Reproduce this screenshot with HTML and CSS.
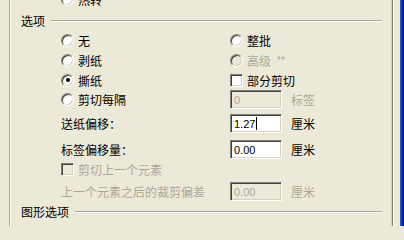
FILE: index.html
```html
<!DOCTYPE html>
<html>
<head>
<meta charset="utf-8">
<link rel="stylesheet" href="styles.css">
</head>
<body>
<div class="panel">
  <div class="row r0">
    <label class="opt"><span class="radio"></span>热转</label>
  </div>
  <div class="legend h20"><span>选项</span><i class="rule"></i></div>
  <div class="row h20">
    <label class="opt"><span class="radio"></span>无</label>
    <label class="opt span2"><span class="radio"></span>整批</label>
  </div>
  <div class="row h20">
    <label class="opt"><span class="radio"></span>剥纸</label>
    <label class="opt span2 dis"><span class="radio off"></span>高级 <span class="ast">**</span></label>
  </div>
  <div class="row h20">
    <label class="opt"><span class="radio on"></span>撕纸</label>
    <label class="opt span2"><span class="check"></span>部分剪切</label>
  </div>
  <div class="row h19">
    <label class="opt"><span class="radio"></span>剪切每隔</label>
    <div class="field off">0</div>
    <span class="dis">标签</span>
  </div>
  <div class="row h19 m5">
    <span>送纸偏移：</span>
    <div class="field">1.27<span class="caret"></span></div>
    <span>厘米</span>
  </div>
  <div class="row h19 m7">
    <span>标签偏移量：</span>
    <div class="field">0.00</div>
    <span>厘米</span>
  </div>
  <div class="row h21">
    <label class="opt dis"><span class="check off"></span>剪切上一个元素</label>
  </div>
  <div class="row h19 m2">
    <span class="dis">上一个元素之后的裁剪偏差</span>
    <div class="field off">0.00</div>
    <span class="dis">厘米</span>
  </div>
  <div class="legend h20"><span>图形选项</span><i class="rule"></i></div>
</div>
<div class="gap"></div>
<div class="edge"></div>
</body>
</html>
```
FILE: styles.css
```css
html, body {
  margin: 0;
  padding: 0;
}
body {
  width: 404px;
  height: 226px;
  overflow: hidden;
  display: flex;
  background: #ECE9D8;
  font-family: "Noto Sans CJK SC", "Noto Sans", sans-serif;
  font-size: 12px;
  color: #000;
}
.panel {
  flex: none;
  margin-left: 9px;
  width: 385px;
  height: 226px;
  box-sizing: border-box;
  border-left: 1px solid #ACA899;
  border-right: 1px solid #ffffff;
  box-shadow: inset 1px 0 0 #ffffff, inset -1px 0 0 #808080, inset -2px 0 0 #D4D0C8;
  overflow: hidden;
}
.gap {
  flex: none;
  width: 6px;
}
.edge {
  flex: none;
  width: 4px;
  background: linear-gradient(to right, #2B5BE0 0, #2B5BE0 1px, #0831D9 1px, #0831D9 2px, #0026B8 2px, #0026B8 3px, #001C9C 3px);
}
.row {
  display: grid;
  grid-template-columns: 160px 52px auto;
  column-gap: 9px;
  align-items: center;
  padding-left: 51px;
  white-space: nowrap;
}
.r0 { height: 21px; margin-top: -11px; }
.h19 { height: 19px; }
.h20 { height: 20px; }
.h21 { height: 21px; }
.m2 { margin-top: 2px; }
.m5 { margin-top: 5px; }
.m7 { margin-top: 7px; }
.span2 { grid-column: 2 / 4; }
.opt {
  display: flex;
  align-items: center;
  gap: 4px;
}
.dis { color: #ACA899; }
.ast {
  font-family: "Liberation Sans", sans-serif;
  font-size: 10px;
  margin-left: 2px;
  align-self: flex-start;
  margin-top: 3px;
}
.radio {
  flex: none;
  width: 13px;
  height: 13px;
  box-sizing: border-box;
  border-radius: 50%;
  border: 1px solid;
  border-color: #808080 #ffffff #ffffff #808080;
  box-shadow: inset 1px 1px 0 #404040, inset -1px -1px 0 #D4D0C8;
  background: #ffffff;
  display: grid;
  place-items: center;
}
.radio.off { background: #ECE9D8; }
.radio.on::after {
  content: "";
  width: 4px;
  height: 4px;
  border-radius: 50%;
  background: #000;
}
.check {
  flex: none;
  width: 13px;
  height: 13px;
  box-sizing: border-box;
  border: 1px solid;
  border-color: #808080 #ffffff #ffffff #808080;
  box-shadow: inset 1px 1px 0 #404040, inset -1px -1px 0 #D4D0C8;
  background: #ffffff;
}
.check.off { background: #ECE9D8; }
.field {
  width: 52px;
  height: 19px;
  box-sizing: border-box;
  border: 1px solid;
  border-color: #808080 #ffffff #ffffff #808080;
  box-shadow: inset 1px 1px 0 #404040, inset -1px -1px 0 #D4D0C8;
  background: #ffffff;
  font-family: "Liberation Sans", "DejaVu Sans", sans-serif;
  font-size: 11px;
  padding-left: 3px;
  display: flex;
  align-items: center;
}
.field.off {
  background: #ECE9D8;
  color: #ACA899;
}
.caret {
  width: 1px;
  height: 13px;
  background: #000;
  margin-left: 1px;
}
.legend {
  display: flex;
  align-items: center;
  padding-left: 11px;
  margin-right: 11px;
  white-space: nowrap;
}
.rule {
  flex: 1;
  height: 0;
  margin-left: 6px;
  margin-top: 2px;
  border-top: 1px solid #ACA899;
  border-bottom: 1px solid #ffffff;
}
```
